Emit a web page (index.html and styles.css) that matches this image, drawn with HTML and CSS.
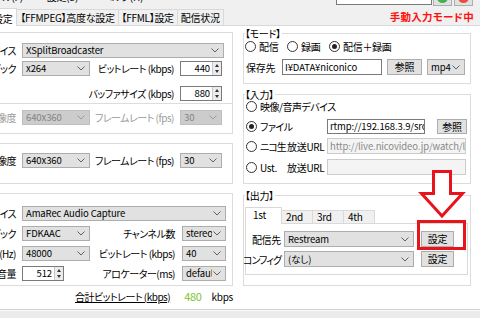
FILE: index.html
```html
<!DOCTYPE html>
<html lang="ja">
<head>
<meta charset="utf-8">
<title>設定</title>
<link rel="stylesheet" href="styles.css">
</head>
<body>
<div class="top">
  <div class="menu"><span>ファイル(F)</span><span>設定(S)</span><span>ヘルプ(H)</span></div>
  <div class="topright">
    <div class="tbox"></div>
    <div class="tbtn"><span class="dot green"></span></div>
    <div class="tbtn"><span class="dot red"></span></div>
  </div>
</div>
<div class="tabrow">
  <div class="tab sel">設定</div>
  <div class="tab">【FFMPEG】高度な設定</div>
  <div class="tab">【FFML】設定</div>
  <div class="tab">配信状況</div>
  <div class="manual">手動入力モード中</div>
</div>
<div class="page">
  <div class="left">
    <div class="grp gA">
      <div class="row r1"><span class="lbl">デバイス</span><div class="combo w202"><span>XSplitBroadcaster</span><svg class="chev" width="8" height="5" viewBox="0 0 8 5"><path d="M0.5 0.5L4 4L7.5 0.5"/></svg></div></div>
      <div class="row r2"><span class="lbl">コーデック</span><div class="combo w68"><span>x264</span><svg class="chev" width="8" height="5" viewBox="0 0 8 5"><path d="M0.5 0.5L4 4L7.5 0.5"/></svg></div><span class="lbl2">ビットレート (kbps)</span><div class="spin w42"><span>440</span><div class="arr"><i class="up"></i><i class="dn"></i></div></div></div>
      <div class="row r3"><span class="pad130"></span><span class="lbl2">バッファサイズ (kbps)</span><div class="spin w42"><span>880</span><div class="arr"><i class="up"></i><i class="dn"></i></div></div></div>
    </div>
    <div class="grp gB">
      <div class="row dis"><span class="lbl">解像度</span><div class="combo w68 off"><span>640x360</span><svg class="chev" width="8" height="5" viewBox="0 0 8 5"><path d="M0.5 0.5L4 4L7.5 0.5"/></svg></div><span class="lbl2">フレームレート (fps)</span><div class="combo w42 off"><span>30</span><svg class="chev" width="8" height="5" viewBox="0 0 8 5"><path d="M0.5 0.5L4 4L7.5 0.5"/></svg></div></div>
    </div>
    <div class="grp gC">
      <div class="row"><span class="lbl">解像度</span><div class="combo w68"><span>640x360</span><svg class="chev" width="8" height="5" viewBox="0 0 8 5"><path d="M0.5 0.5L4 4L7.5 0.5"/></svg></div><span class="lbl2">フレームレート (fps)</span><div class="combo w42"><span>30</span><svg class="chev" width="8" height="5" viewBox="0 0 8 5"><path d="M0.5 0.5L4 4L7.5 0.5"/></svg></div></div>
    </div>
    <div class="grp gD">
      <div class="row"><span class="lbl">デバイス</span><div class="combo w204"><span>AmaRec Audio Capture</span><svg class="chev" width="8" height="5" viewBox="0 0 8 5"><path d="M0.5 0.5L4 4L7.5 0.5"/></svg></div></div>
      <div class="row"><span class="lbl">コーデック</span><div class="combo w68"><span>FDKAAC</span><svg class="chev" width="8" height="5" viewBox="0 0 8 5"><path d="M0.5 0.5L4 4L7.5 0.5"/></svg></div><span class="lbl3">チャンネル数</span><div class="combo w44"><span>stereo</span><svg class="chev" width="8" height="5" viewBox="0 0 8 5"><path d="M0.5 0.5L4 4L7.5 0.5"/></svg></div></div>
      <div class="row"><span class="lbl">サンプリング(Hz)</span><div class="combo w68"><span>48000</span><svg class="chev" width="8" height="5" viewBox="0 0 8 5"><path d="M0.5 0.5L4 4L7.5 0.5"/></svg></div><span class="lbl3">ビットレート (kbps)</span><div class="combo w44"><span>40</span><svg class="chev" width="8" height="5" viewBox="0 0 8 5"><path d="M0.5 0.5L4 4L7.5 0.5"/></svg></div></div>
      <div class="row"><span class="lbl">音量</span><div class="spin w42"><span>512</span><div class="arr"><i class="up"></i><i class="dn"></i></div></div><span class="lbl4">アロケーター(ms)</span><div class="combo w44"><span>default</span><svg class="chev" width="8" height="5" viewBox="0 0 8 5"><path d="M0.5 0.5L4 4L7.5 0.5"/></svg></div></div>
    </div>
    <div class="total"><u class="kana">合計ビットレート (kbps)</u><span class="num">480</span><span class="unit">kbps</span></div>
  </div>

  <div class="right">
    <div class="rgrp mode">
      <div class="legend">【モード】</div>
      <div class="rrow radios">
        <label class="ritem w42r"><span class="radio"></span>配信</label>
        <label class="ritem w42r"><span class="radio"></span>録画</label>
        <label class="ritem"><span class="radio on"></span>配信＋録画</label>
      </div>
      <div class="rrow save">
        <span class="slbl">保存先</span>
        <div class="tinput w100">I¥DATA¥niconico</div>
        <div class="btn w35">参照</div>
        <div class="combo w38"><span>mp4</span><svg class="chev" width="8" height="5" viewBox="0 0 8 5"><path d="M0.5 0.5L4 4L7.5 0.5"/></svg></div>
      </div>
    </div>

    <div class="rgrp input">
      <div class="legend">【入力】</div>
      <div class="rrow in1"><label class="ritem kana"><span class="radio"></span>映像/音声デバイス</label></div>
      <div class="rrow in2"><label class="ritem w81 kana"><span class="radio on"></span>ファイル</label><div class="tinput w98">rtmp://192.168.3.9/src/c</div><div class="btn w30">参照</div></div>
      <div class="rrow in3"><label class="ritem w41 tight"><span class="radio"></span>ニコ生</label><span class="ulbl">放送URL</span><div class="tinput w139 off">http://live.nicovideo.jp/watch/lv2</div></div>
      <div class="rrow in4"><label class="ritem w41"><span class="radio"></span>Ust.</label><span class="ulbl">放送URL</span><div class="tinput w139 off"></div></div>
    </div>

    <div class="rgrp output">
      <div class="legend">【出力】</div>
      <div class="otabs">
        <div class="otab sel">1st</div>
        <div class="otab">2nd</div>
        <div class="otab">3rd</div>
        <div class="otab">4th</div>
      </div>
      <div class="opanel">
        <div class="orow o1"><span class="olbl">配信先</span><div class="combo w130"><span>Restream</span><svg class="chev" width="8" height="5" viewBox="0 0 8 5"><path d="M0.5 0.5L4 4L7.5 0.5"/></svg></div><div class="btn w33">設定</div></div>
        <div class="orow o2"><span class="olbl tight">コンフィグ</span><div class="combo w130"><span>(なし)</span><svg class="chev" width="8" height="5" viewBox="0 0 8 5"><path d="M0.5 0.5L4 4L7.5 0.5"/></svg></div><div class="btn w33">設定</div></div>
      </div>
    </div>
  </div>

  <svg class="annot" width="56" height="88" viewBox="0 0 56 88">
    <polygon points="18.5,5.5 35.5,5.5 35.5,27.5 47.5,27.5 27,50 6.5,27.5 18.5,27.5" fill="#fff" stroke="#e8141c" stroke-width="3" stroke-linejoin="miter"/>
    <rect x="3.5" y="55.5" width="46" height="27" fill="none" stroke="#e8141c" stroke-width="3"/>
  </svg>
</div>
<div class="status"></div>
</body>
</html>
```

FILE: styles.css
```css
* { box-sizing: border-box; margin: 0; padding: 0; }
html, body { width: 480px; height: 318px; overflow: hidden; }
body {
  background: #f0f0f0;
  font-family: "Noto Sans CJK JP", "Noto Sans", sans-serif;
  font-size: 10px;
  line-height: 13px;
  letter-spacing: -0.3px;
  color: #000;
  font-feature-settings: "palt";
}
.kana, .lbl, .lbl2, .lbl3, .lbl4 { letter-spacing: -0.5px; }
.tight { letter-spacing: -1px; }

/* top strip */
.top { height: 8px; display: flex; overflow: hidden; }
.menu { display: flex; gap: 24px; margin-top: -10px; margin-left: -22px; height: 13px; white-space: nowrap; }
.topright { margin-left: auto; margin-right: 7px; display: flex; align-items: flex-start; gap: 2px; }
.tbox { width: 96px; height: 5px; background: #fff; border: 1px solid #7a7a7a; border-top: none; margin-right: -1px; }
.tbtn { width: 19px; height: 6px; background: #e1e1e1; border: 1px solid #adadad; border-top: none; display: flex; justify-content: center; overflow: hidden; }
.dot { width: 11px; height: 11px; border-radius: 50%; margin-top: -8px; }
.green { background: #3fb34f; }
.red { background: #e4523f; }

/* tabs */
.tabrow { height: 17px; display: flex; align-items: flex-end; }
.tab { height: 16px; border: 1px solid #d9d9d9; border-bottom: none; background: #f0f0f0; padding: 0 3px; line-height: 15px; margin-left: -1px; white-space: nowrap; }
.tab.sel { height: 18px; background: #fff; margin-left: -12px; margin-bottom: -1px; position: relative; z-index: 1; padding: 2px 4px 0; }
.manual { margin-left: auto; margin-right: 6px; align-self: center; color: #ff1010; font-weight: bold; font-size: 10.5px; letter-spacing: 0.3px; }

/* page */
.page { height: 285px; background: #fff; border-top: 1px solid #d9d9d9; border-bottom: 1px solid #cfcfcf; display: flex; position: relative; }
.status { height: 8px; background: #ebebeb; border-top: 1px solid #fafafa; }

/* left column */
.left { margin-left: -40px; width: 273px; padding-top: 6px; flex: none; }
.grp { border: 1px solid #dcdcdc; border-left: none; }
.gA { height: 71px; border-bottom: none; padding-top: 10px; }
.gB { height: 31px; padding-top: 6px; }
.gC { height: 41px; margin-top: 9px; padding-top: 9px; }
.gD { height: 93px; margin-top: 9px; padding-top: 12px; }
.gD .row + .row { margin-top: 5px; }
.row { display: flex; align-items: center; height: 15px; white-space: nowrap; }
.r2 { margin-top: 3px; }
.r3 { margin-top: 10px; }
.lbl, .lbl2, .lbl3, .lbl4, .olbl { display: flex; justify-content: flex-end; white-space: nowrap; flex: none; }
.lbl { width: 56px; margin-right: 6px; }
.pad130 { width: 130px; flex: none; }
.lbl2 { width: 84px; margin-right: 6px; }
.lbl3 { width: 85px; margin-right: 7px; }
.lbl4 { width: 111px; margin-right: 7px; }
.dis .lbl, .dis .lbl2 { color: #9a9a9a; }

.total { display: flex; justify-content: flex-end; align-items: center; height: 14px; margin-top: 3px; white-space: nowrap; }
.total u { text-decoration: underline; text-underline-offset: 1px; }
.num { color: #7cc32f; margin-left: 14px; font-size: 11px; }
.unit { margin-left: 10px; }

/* controls */
.combo, .spin, .tinput { font-size: 9.5px; letter-spacing: -0.1px; }
.combo { height: 15px; border: 1px solid #adadad; background: #e1e1e1; display: flex; align-items: center; padding-left: 3px; overflow: hidden; white-space: nowrap; flex: none; }
.combo span { flex: 1; overflow: hidden; }
.chev { flex: none; margin: 0 4px 0 1px; fill: none; stroke: #606060; stroke-width: 1; }
.combo.off { background: #cccccc; border-color: #bfbfbf; color: #838383; }
.combo.off .chev { stroke: #9a9a9a; }
.spin { height: 15px; border: 1px solid #7a7a7a; background: #fff; display: flex; align-items: stretch; flex: none; }
.spin span { flex: 1; text-align: right; padding-right: 2px; line-height: 13px; }
.arr { width: 9px; border-left: 1px solid #c8c8c8; background: #ececec; display: flex; flex-direction: column; justify-content: space-around; align-items: center; padding: 1px 0; }
.arr i { display: block; width: 0; height: 0; border-left: 2.5px solid transparent; border-right: 2.5px solid transparent; }
.arr .up { border-bottom: 3px solid #333; }
.arr .dn { border-top: 3px solid #333; }
.tinput { height: 16px; border: 1px solid #7a7a7a; background: #fff; padding-left: 2px; line-height: 14px; overflow: hidden; white-space: nowrap; flex: none; }
.tinput.off { background: #f4f4f4; border-color: #cccccc; color: #8a8a8a; }
.btn { height: 16px; border: 1px solid #adadad; background: #e1e1e1; text-align: center; line-height: 14px; flex: none; }
.radio { width: 11px; height: 11px; border: 1px solid #333; border-radius: 50%; background: #fff; flex: none; display: flex; align-items: center; justify-content: center; }
.radio.on::after { content: ""; width: 5px; height: 5px; border-radius: 50%; background: #222; }

.w30 { width: 30px; } .w33 { width: 33px; } .w35 { width: 35px; } .w38 { width: 38px; }
.w42 { width: 42px; } .w44 { width: 44px; } .w68 { width: 68px; } .w98 { width: 98px; }
.w100 { width: 100px; } .w130 { width: 130px; } .w139 { width: 139px; } .w202 { width: 202px; } .w204 { width: 204px; }

/* right column */
.right { margin-left: 10px; width: 228px; padding-top: 7px; flex: none; }
.rgrp { border: 1px solid #dcdcdc; }
.legend { margin-top: -6px; margin-left: 1px; background: #fff; width: fit-content; padding-right: 1px; height: 11px; line-height: 11px; }
.rrow { display: flex; align-items: center; white-space: nowrap; }
.ritem { display: flex; align-items: center; gap: 3px; flex: none; }

.mode { height: 51px; }
.radios { height: 13px; margin-top: 1px; padding-left: 1px; }
.w42r { width: 42px; }
.save { height: 16px; margin-top: 6px; padding-left: 2px; }
.slbl { width: 36px; flex: none; }
.save .btn { margin-left: 5px; }
.save .combo { margin-left: 5px; height: 16px; }

.input { height: 90px; margin-top: 10px; }
.in1 { height: 12px; margin-top: 0; padding-left: 2px; }
.in2 { height: 15px; margin-top: 7px; padding-left: 2px; }
.in2 .tinput { height: 15px; line-height: 13px; }
.in2 .btn { margin-left: 12px; height: 15px; line-height: 13px; }
.in3 { height: 16px; margin-top: 4px; padding-left: 2px; }
.in4 { height: 16px; margin-top: 5px; padding-left: 2px; }
.w81 { width: 81px; } .w41 { width: 41px; }
.ulbl { width: 40px; flex: none; }

.output { height: 91px; margin-top: 11px; }
.otabs { display: flex; align-items: flex-end; margin-top: 5px; margin-left: 1px; height: 17px; }
.otab { height: 13px; border: 1px solid #d9d9d9; border-bottom: none; background: #f0f0f0; padding-left: 4px; line-height: 12px; width: 32px; margin-left: -1px; }
.otab.sel { height: 17px; background: #fff; width: 37px; margin-left: 0; padding-left: 7px; line-height: 11px; position: relative; z-index: 1; margin-bottom: -1px; padding-top: 1px; }
.opanel { margin-left: 1px; width: 223px; height: 52px; border: 1px solid #d9d9d9; }
.orow { display: flex; align-items: center; height: 16px; }
.o1 { margin-top: 7px; }
.o2 { margin-top: 4px; }
.olbl { width: 38px; padding-right: 3px; }
.orow .combo { height: 16px; }
.orow .btn { margin-left: 7px; }

/* annotation overlay */
.annot { position: absolute; left: 415px; top: 140px; }
```
